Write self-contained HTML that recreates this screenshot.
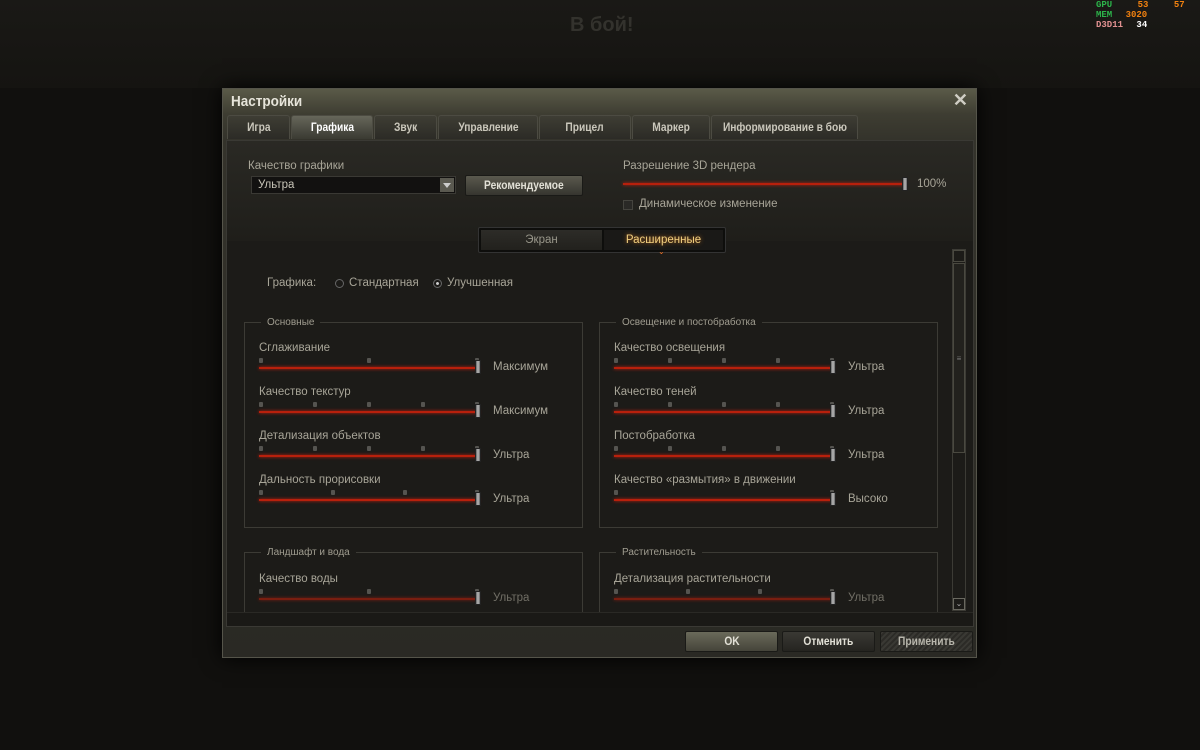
<!DOCTYPE html>
<html><head><meta charset="utf-8"><style>
*{margin:0;padding:0;box-sizing:border-box}
body{width:1200px;height:750px;overflow:hidden;background:#11100e;font-family:"Liberation Sans","Noto Sans CJK SC",sans-serif;position:relative;color:#b8b4a6}
.a{position:absolute}
.bgtop{left:0;top:0;width:1200px;height:88px;background:linear-gradient(#1a1916,#151411)}
.dlg{left:222px;top:88px;width:755px;height:570px;background:linear-gradient(#5a5a48,#3e3d32 25px,#34332b 50px,#2a2924);border:1px solid #55544a;box-shadow:0 0 20px #000}
.title{left:8px;top:4px;font-size:15px;font-weight:bold;color:#e6e4da;transform:scaleX(.9);transform-origin:left}
.close{right:8px;top:1px;font-size:18px;color:#cfcdc4;font-weight:bold}
.tab{top:26px;height:24px;background:linear-gradient(#3e3d34,#2c2b26);border:1px solid #4c4b42;border-bottom:none;border-radius:3px 3px 0 0;font-size:12px;font-weight:bold;color:#cac7bb;text-align:center;line-height:23px;white-space:nowrap;overflow:hidden}
.tab span,.btn span{display:inline-block;transform:scaleX(.85)}
.tab.on{background:linear-gradient(#66665a,#3a3a32);color:#fff}
.content{left:3px;top:51px;width:748px;height:487px;background:#1c1b18;border:1px solid #3a3934;overflow:hidden}
.upper{left:0;top:0;width:746px;height:100px;background:linear-gradient(#2a2924,#1f1e1a)}
.lbl{font-size:11.5px;color:#a8a598;white-space:nowrap}
.sel{left:24px;top:35px;width:205px;height:18px;background:#121110;border:1px solid #3a3934;font-size:11.5px;color:#c8c5b8;padding-left:6px;line-height:16px}
.arr{right:1px;top:1px;width:14px;height:14px;background:#5a5950}
.btn{background:linear-gradient(#5a594e,#36352f);border:1px solid #1a1a17;border-radius:2px;font-size:12px;font-weight:bold;color:#e2e0d6;text-align:center;white-space:nowrap}
.track{height:2px;background:#b8200c;box-shadow:0 0 3px #d02010}
.knob{width:6px;height:14px;background:linear-gradient(90deg,#666,#bbb,#666);border:1px solid #222}
.tick{width:4px;height:5px;background:#555450;border-radius:1px}
.box{border:1px solid #3c3b35}
.leg{font-size:10px;color:#a09d90;background:#1c1b18;padding:0 6px;white-space:nowrap}
.val{font-size:11.5px;color:#a8a598;white-space:nowrap}
</style></head><body>
<div class="a bgtop"></div>
<div class="a" style="left:570px;top:14px;font-size:20px;color:#33322d;font-weight:bold">В бой!</div>
<div class="a" style="left:1096px;top:0;font-size:9px;line-height:10px;font-family:'Liberation Mono',monospace;font-weight:bold">
<div><span style="color:#2cb34a">GPU</span> <span style="color:#f08010;margin-left:20px">53</span> <span style="color:#f08010;margin-left:20px">57</span></div>
<div><span style="color:#2cb34a">MEM</span> <span style="color:#f08010;margin-left:8px">3020</span></div>
<div><span style="color:#e09090">D3D11</span> <span style="color:#fff;margin-left:8px">34</span></div></div>

<div class="a dlg">
<div class="a title">Настройки</div>
<div class="a close">✕</div>
<div class="a tab" style="left:4px;width:63px"><span>Игра</span></div>
<div class="a tab on" style="left:68px;width:82px"><span>Графика</span></div>
<div class="a tab" style="left:151px;width:63px"><span>Звук</span></div>
<div class="a tab" style="left:215px;width:100px"><span>Управление</span></div>
<div class="a tab" style="left:316px;width:92px"><span>Прицел</span></div>
<div class="a tab" style="left:409px;width:78px"><span>Маркер</span></div>
<div class="a tab" style="left:488px;width:147px"><span>Информирование в бою</span></div>

<div class="a content">
<div class="a upper"></div>
<div class="a lbl" style="left:21px;top:19px">Качество графики</div>
<div class="a sel">Ультра<div class="a arr"><svg width="14" height="14"><path d="M3 5h8l-4 5z" fill="#ccc"/></svg></div></div>
<div class="a btn" style="left:238px;top:34px;width:118px;height:21px;line-height:19px"><span>Рекомендуемое</span></div>
<div class="a lbl" style="left:396px;top:19px">Разрешение 3D рендера</div>
<div class="a track" style="left:396px;top:42px;width:282px"></div>
<div class="a knob" style="left:675px;top:36px"></div>
<div class="a val" style="left:690px;top:37px">100%</div>
<div class="a" style="left:396px;top:59px;width:10px;height:10px;background:#2a2926;border:1px solid #45443e"></div>
<div class="a lbl" style="left:412px;top:57px">Динамическое изменение</div>

<div class="a" style="left:251px;top:86px;width:248px;height:26px;background:#0e0e0c;border:1px solid #333;border-radius:2px"></div>
<div class="a" style="left:254px;top:89px;width:121px;height:20px;background:linear-gradient(#2d2c28,#22211d);font-size:11.5px;color:#98968a;text-align:center;line-height:20px">Экран</div>
<div class="a" style="left:377px;top:89px;width:119px;height:20px;background:#1a1917;font-size:11.5px;color:#f2d080;text-align:center;line-height:20px;text-shadow:0 0 4px #c07020">Расширенные</div>
<div class="a" style="left:431px;top:106px;font-size:8px;color:#f07020">⌄</div>

<div id="sl"></div>

<div class="a" style="left:0;top:471px;width:748px;height:20px;background:#1a1916;border-top:1px solid #2a2925"></div>
<div class="a" style="left:725px;top:108px;width:14px;height:362px;border:1px solid #3c3b35;background:#1c1b18"></div>
<div class="a" style="left:726px;top:109px;width:12px;height:12px;border:1px solid #4a4940"></div>
<div class="a" style="left:726px;top:122px;width:12px;height:190px;border:1px solid #4a4940;background:#22211d;color:#777;font-size:8px;text-align:center;line-height:190px">≡</div>
<div class="a" style="left:726px;top:457px;width:12px;height:12px;border:1px solid #6a6960;font-size:8px;color:#aaa;text-align:center;line-height:10px">⌄</div>
</div>

<div class="a btn" style="left:462px;top:542px;width:93px;height:21px;line-height:19px;background:linear-gradient(#6a6a5a,#45443a)"><span>OK</span></div>
<div class="a btn" style="left:559px;top:542px;width:93px;height:21px;line-height:19px;background:linear-gradient(#3a3934,#252420)"><span>Отменить</span></div>
<div class="a btn" style="left:657px;top:542px;width:93px;height:21px;line-height:19px;background:repeating-linear-gradient(135deg,#3a3934 0 2px,#2c2b27 2px 4px);color:#b8b6ac"><span>Применить</span></div>
</div>

<script>
var c=document.getElementById('sl');
function s(x,y,name,ticks,val,dim){
 var h='<div class="a lbl" style="left:'+x+'px;top:'+y+'px">'+name+'</div>';
 ticks.forEach(function(t){h+='<div class="a tick" style="left:'+(x+t)+'px;top:'+(y+16)+'px"></div>'});
 h+='<div class="a track" style="left:'+x+'px;top:'+(y+25)+'px;width:220px'+(dim?';opacity:.6':'')+'"></div>';
 h+='<div class="a knob" style="left:'+(x+216)+'px;top:'+(y+18)+'px"></div>';
 h+='<div class="a val" style="left:'+(x+234)+'px;top:'+(y+19)+'px'+(dim?';opacity:.6':'')+'">'+val+'</div>';
 c.insertAdjacentHTML('beforeend',h);
}
c.insertAdjacentHTML('beforeend','<div class="a lbl" style="left:40px;top:136px">Графика:</div><div class="a" style="left:108px;top:138px;width:9px;height:9px;border:1px solid #666;border-radius:50%"></div><div class="a lbl" style="left:122px;top:136px">Стандартная</div><div class="a" style="left:206px;top:138px;width:9px;height:9px;border:1px solid #666;border-radius:50%;background:radial-gradient(#ccc 25%,transparent 35%)"></div><div class="a lbl" style="left:220px;top:136px">Улучшенная</div>'
+'<div class="a box" style="left:17px;top:181px;width:339px;height:206px"></div><div class="a leg" style="left:34px;top:176px">Основные</div>'
+'<div class="a box" style="left:372px;top:181px;width:339px;height:206px"></div><div class="a leg" style="left:389px;top:176px">Освещение и постобработка</div>'
+'<div class="a box" style="left:17px;top:411px;width:339px;height:80px"></div><div class="a leg" style="left:34px;top:406px">Ландшафт и вода</div>'
+'<div class="a box" style="left:372px;top:411px;width:339px;height:80px"></div><div class="a leg" style="left:389px;top:406px">Растительность</div>');
var L=32,R=387;
s(L,201,'Сглаживание',[0,108,216],'Максимум');
s(L,245,'Качество текстур',[0,54,108,162,216],'Максимум');
s(L,289,'Детализация объектов',[0,54,108,162,216],'Ультра');
s(L,333,'Дальность прорисовки',[0,72,144,216],'Ультра');
s(R,201,'Качество освещения',[0,54,108,162,216],'Ультра');
s(R,245,'Качество теней',[0,54,108,162,216],'Ультра');
s(R,289,'Постобработка',[0,54,108,162,216],'Ультра');
s(R,333,'Качество «размытия» в движении',[0,216],'Высоко');
s(L,432,'Качество воды',[0,108,216],'Ультра',1);
s(R,432,'Детализация растительности',[0,72,144,216],'Ультра',1);
</script>
</body></html>
